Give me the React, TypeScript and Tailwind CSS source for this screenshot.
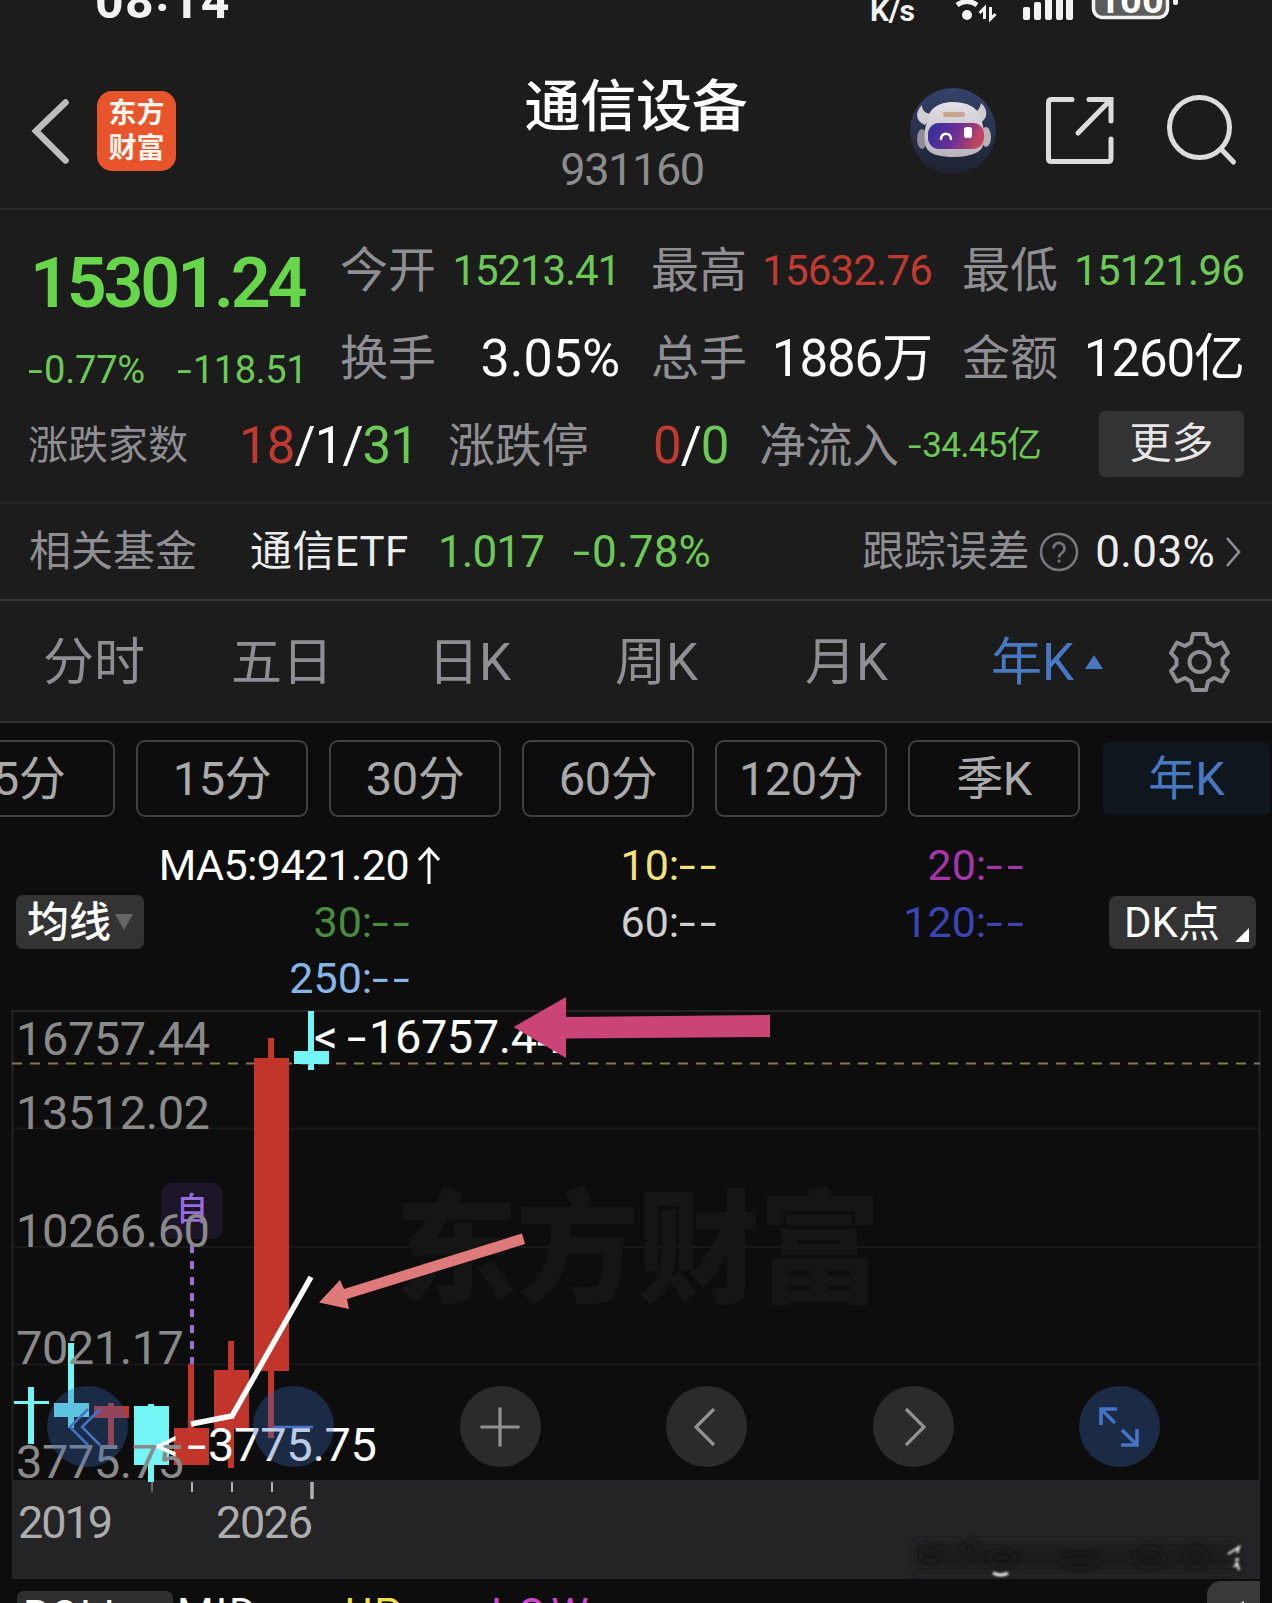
import type { ReactNode } from 'react';

const UP = 'text-[#c03a30]';
const DOWN = 'text-[#6cc956]';

interface Quote {
  label: string;
  value: string;
  valueClass: string;
}

const quoteColumns: { className: string; items: Quote[] }[] = [
  {
    className: 'w-[280px]',
    items: [
      { label: '今开', value: '15213.41', valueClass: `${DOWN} text-[42px] tracking-[-1.1px]` },
      { label: '换手', value: '3.05%', valueClass: 'text-white text-[52px] tracking-[0px]' },
    ],
  },
  {
    className: 'w-[281px] ml-[31px]',
    items: [
      { label: '最高', value: '15632.76', valueClass: `${UP} text-[42px] tracking-[-0.8px]` },
      { label: '总手', value: '1886万', valueClass: 'text-white text-[51px] tracking-[-1.1px]' },
    ],
  },
  {
    className: 'w-[282px] ml-[30px]',
    items: [
      { label: '最低', value: '15121.96', valueClass: `${DOWN} text-[42px] tracking-[-0.8px]` },
      { label: '金额', value: '1260亿', valueClass: 'text-white text-[51px] tracking-[-1.1px]' },
    ],
  },
];

const periods = ['5分', '15分', '30分', '60分', '120分', '季K'];

const yLabels = [
  { text: '16757.44', x: 16, y: 1054, w: 194 },
  { text: '13512.02', x: 16, y: 1128, w: 194 },
  { text: '10266.60', x: 16, y: 1246, w: 194 },
  { text: '7021.17', x: 16, y: 1363, w: 168 },
  { text: '3775.75', x: 16, y: 1477, w: 168 },
];

const RED = '#c1352b';
const CYAN = '#72f5f4';

const candles = [
  { x: 14, color: CYAN, high: 1386, low: 1443, top: 1400, bottom: 1403 },
  { x: 54, color: CYAN, high: 1342, low: 1427, top: 1402, bottom: 1416 },
  { x: 94, color: RED, high: 1402, low: 1447, top: 1405, bottom: 1417 },
  { x: 134, color: CYAN, high: 1403, low: 1481, top: 1405, bottom: 1464 },
  { x: 174, color: RED, high: 1363, low: 1464, top: 1427, bottom: 1464 },
  { x: 214, color: RED, high: 1340, low: 1467, top: 1369, bottom: 1428 },
  { x: 254, color: RED, high: 1037, low: 1437, top: 1057, bottom: 1370 },
  { x: 294, color: CYAN, high: 1010, low: 1069, top: 1050, bottom: 1063 },
];

// wide minus sign, the plain hyphen is too short next to the digits
function Minus() {
  return <span className="mr-[0.15em] inline-block origin-left scale-x-140">-</span>;
}

function NoData() {
  return (
    <>
      <span className="mr-[9px] inline-block origin-left scale-x-140">-</span>
      <span className="mr-[4px] inline-block origin-left scale-x-140">-</span>
    </>
  );
}

function StatusBar() {
  return (
    <div className="relative h-[48px] text-[#f2f2f2]">
      <div className="absolute left-[95px] top-[-29px] flex text-[50px] leading-[60px] font-bold tracking-[1.4px]">
        08<span className="-mt-[7px]">:</span>14
      </div>
      <div className="absolute left-[870px] top-[-9px] text-[30px] leading-[40px] font-bold tracking-[-0.3px]">K/s</div>
      <svg className="absolute left-[950px] top-0" width="240" height="24" viewBox="950 0 240 24" fill="none">
        <circle cx="967" cy="15" r="5" fill="#f2f2f2" />
        <path d="M957 5 Q967 -2 977 5" stroke="#f2f2f2" strokeWidth="5" />
        <path d="M984.500 19V8l-5 5M990.500 7v12l5-5" stroke="#f2f2f2" strokeWidth="3" />
        <g fill="#f2f2f2">
          <rect x="1023" y="7" width="7" height="13" rx="2" />
          <rect x="1034" y="2" width="7" height="18" rx="2" />
          <rect x="1045" y="-5" width="7" height="25" rx="2" />
          <rect x="1056" y="-5" width="7" height="25" rx="2" />
          <rect x="1066" y="-5" width="7" height="25" rx="2" />
          <rect x="1173" y="-6" width="5" height="11" rx="2" />
        </g>
        <rect x="1093.500" y="-20" width="74" height="37.500" rx="9" fill="#5c5c5c" stroke="#f2f2f2" strokeWidth="3.500" />
        <text x="1131" y="13" textAnchor="middle" fontSize="38" fontWeight="700" fill="#fff">100</text>
      </svg>
    </div>
  );
}

function RobotAvatar() {
  return (
    <svg width="86" height="86" viewBox="0 0 86 86">
      <defs>
        <linearGradient id="bg" x1="0" y1="0" x2="0" y2="1">
          <stop offset="0" stopColor="#35426a" />
          <stop offset="1" stopColor="#1d2230" />
        </linearGradient>
        <linearGradient id="visor" x1="0" y1="0" x2="1" y2="0.2">
          <stop offset="0" stopColor="#2f2f9c" />
          <stop offset="0.55" stopColor="#6a2f96" />
          <stop offset="1" stopColor="#c04660" />
        </linearGradient>
        <linearGradient id="shell" x1="0" y1="0" x2="0" y2="1">
          <stop offset="0" stopColor="#e2dfe4" />
          <stop offset="1" stopColor="#b9b5bd" />
        </linearGradient>
      </defs>
      <circle cx="43" cy="43" r="43" fill="url(#bg)" />
      <path d="M12 17c-7 7-7 16 3 20l8-11c-7 0-11-3-11-9zM71 15c8 7 7 17-3 21l-8-11c7 0 10-4 11-10z" fill="#cfccd4" />
      <ellipse cx="12" cy="51" rx="5" ry="10" fill="#8f8b98" />
      <ellipse cx="76" cy="49" rx="5" ry="10" fill="#b9b2bb" />
      <path d="M18 31c1-11 12-17 25-17s25 5 27 15c5 10 5 24 2 31-4 6-16 9-28 9s-23-2-27-8c-4-8-3-20 1-30z" fill="url(#shell)" />
      <rect x="33" y="24" width="22" height="5" rx="2.500" fill="#c4a58e" />
      <rect x="18" y="35" width="56" height="26" rx="11" fill="url(#visor)" />
      <path d="M31 51c1-7 9-7 10 0" stroke="#fff" strokeWidth="2.500" fill="none" strokeLinecap="round" />
      <rect x="54" y="39" width="8" height="11" rx="2.500" fill="#fff" />
    </svg>
  );
}

function Header() {
  return (
    <div className="flex h-[162px] items-start border-b-2 border-[#2c2c2c] pt-[40px]">
      <svg className="ml-[28px] mt-[8px]" width="44" height="70" viewBox="28 96 44 70" fill="none">
        <path d="M65.500 102.500L36 131L65.500 160.500" stroke="#bdbdbd" strokeWidth="6.500" strokeLinecap="round" />
      </svg>
      <div className="ml-[25px] mt-[3px] h-[80px] w-[79px] rounded-[15px] bg-[#e8552c] pt-[5px] text-center text-[28px] leading-[35px] font-bold text-[#fff6ee]">
        <div>东方</div>
        <div>财富</div>
      </div>
      <div className="-mt-[21px] ml-[324px] w-[272px] text-center">
        <div className="text-[56px] leading-[80px] font-medium tracking-[-0.3px] text-white">通信设备</div>
        <div className="-mt-[3px] -ml-[8px] text-[45px] leading-[52px] tracking-[-1.4px] text-[#8c8c8c]">931160</div>
      </div>
      <div className="ml-[138px]">
        <RobotAvatar />
      </div>
      <svg className="ml-[46px] mt-[5px]" width="76" height="76" viewBox="1043 93 76 76" fill="none" stroke="#dcdcdc" strokeWidth="5">
        <path d="M1073 99.500H1052.500Q1049.500 99.500 1049.500 102.500V158.500Q1049.500 161.500 1052.500 161.500H1109Q1112 161.500 1112 158.500V139" strokeLinecap="round" />
        <path d="M1090 99.500H1112V121M1111 100.500L1079 133" strokeLinecap="round" />
      </svg>
      <svg className="ml-[46px] mt-[5px]" width="76" height="76" viewBox="1164 93 76 76" fill="none" stroke="#dcdcdc" strokeWidth="5">
        <circle cx="1199.500" cy="127.500" r="30" />
        <path d="M1221 149L1233.500 162" strokeLinecap="round" />
      </svg>
    </div>
  );
}

function QuotePanel() {
  return (
    <div className="h-[294px] border-b-2 border-[#262626]">
      <div className="flex h-[190px]">
        <div className="w-[340px]">
          <div className="mt-[33px] ml-[30px] text-[70px] leading-[80px] font-semibold tracking-[-3.2px] text-[#67d64b]">15301.24</div>
          <div className={`mt-[22px] flex text-[38px] leading-[50px] ${DOWN}`}>
            <div className="ml-[28px] w-[149px] tracking-[-0.2px]">
              <Minus />0.77%
            </div>
            <div className="tracking-[-0.4px]">
              <Minus />118.51
            </div>
          </div>
        </div>
        {quoteColumns.map((column, i) => (
          <div key={i} className={`pt-[17px] ${column.className}`}>
            {column.items.map((item) => (
              <div key={item.label} className="flex h-[88px] items-center justify-between leading-[88px]">
                <span className="text-[48px] text-[#8e8e93]">{item.label}</span>
                <span className={item.valueClass}>{item.value}</span>
              </div>
            ))}
          </div>
        ))}
      </div>
      <div className="flex h-[92px] items-center leading-[92px] text-[#8e8e93]">
        <span className="ml-[28px] w-[211px] text-[40px]">涨跌家数</span>
        <span className="w-[209px] text-[51px] tracking-[-0.9px] text-white">
          <span className={UP}>18</span>/1/<span className={DOWN}>31</span>
        </span>
        <span className="w-[205px] text-[47px] tracking-[-0.3px]">涨跌停</span>
        <span className="w-[106px] text-[51px] tracking-[-1px] text-white">
          <span className={UP}>0</span>/<span className={DOWN}>0</span>
        </span>
        <span className="w-[149px] text-[47px] tracking-[-0.5px]">净流入</span>
        <span className={`w-[191px] text-[35px] tracking-[-0.7px] ${DOWN}`}>
          <Minus />34.45亿
        </span>
        <span className="-mt-[4px] h-[66px] w-[145px] rounded-[6px] bg-[#333333] text-center text-[42px] leading-[66px] text-[#e6e6e6]">更多</span>
      </div>
    </div>
  );
}

function FundRow() {
  return (
    <div className="flex h-[97px] items-center border-b-2 border-[#333333] leading-[94px]">
      <span className="ml-[29px] w-[221px] text-[42px] text-[#8e8e93]">相关基金</span>
      <span className="w-[188px] text-[42px] tracking-[0.4px] text-[#ececec]">通信ETF</span>
      <span className={`w-[135px] text-[44px] tracking-[-0.9px] ${DOWN}`}>1.017</span>
      <span className={`w-[289px] text-[44px] tracking-[0.2px] ${DOWN}`}>
        <Minus />0.78%
      </span>
      <span className="text-[42px] tracking-[-0.2px] text-[#8e8e93]">跟踪误差</span>
      <svg className="ml-[9px]" width="42" height="42" viewBox="0 0 42 42" fill="none" stroke="#77777b" strokeWidth="2.600">
        <circle cx="21" cy="21" r="18" />
        <path d="M15.500 17.500a5.500 5.500 0 1 1 8.500 4.500c-2.500 1.600-3 2.400-3 4.500M21 28.500v3" />
      </svg>
      <span className="ml-[15px] w-[130px] text-[44px] tracking-[0.4px] text-[#ececec]">0.03%</span>
      <svg width="18" height="32" viewBox="0 0 18 32" fill="none" stroke="#8e8e93" strokeWidth="2.600">
        <path d="M2 2L14 16L2 30" />
      </svg>
    </div>
  );
}

function Tab({ className, children }: { className: string; children: ReactNode }) {
  return <span className={`text-[51px] leading-[118px] ${className}`}>{children}</span>;
}

function PeriodTabs() {
  return (
    <div className="flex h-[122px] items-center border-b-2 border-[#2f2f2f] text-[#8e8e93]">
      <Tab className="ml-[43px] mt-[4px] w-[188px]">分时</Tab>
      <Tab className="mt-[4px] w-[197px]">五日</Tab>
      <Tab className="mt-[4px] w-[187px]">日K</Tab>
      <Tab className="mt-[4px] w-[190px]">周K</Tab>
      <Tab className="mt-[4px] w-[186px]">月K</Tab>
      <Tab className="mt-[4px] w-[93px] text-[#4878c2]">年K</Tab>
      <svg className="mt-[2px]" width="20" height="14" viewBox="0 0 20 14">
        <path d="M10 0L19 14H1z" fill="#4878c2" />
      </svg>
      <svg className="mt-[2px] ml-[63px]" width="64" height="64" viewBox="0 0 64 64" fill="none" stroke="#8e8e93" strokeWidth="4">
        <path
          d="M26 4H39L41 12.500L47 16L55 12.500L61 23L55.500 29V35L61 41L55 51.500L47 48L41 51.500L39 60H26L24 51.500L18 48L10 51.500L4 41L9.500 35V29L4 23L10 12.500L18 16L24 12.500z"
          strokeLinejoin="round"
        />
        <circle cx="32.500" cy="32" r="10" />
      </svg>
    </div>
  );
}

function PeriodChips() {
  return (
    <div className="-ml-[57px] flex h-[95px] w-[1400px] gap-[21px] pt-[17px]">
      {periods.map((period) => (
        <div
          key={period}
          className="h-[77px] w-[172px] shrink-0 rounded-[9px] border-2 border-[#404040] text-center text-[47px] leading-[74px] tracking-[-0.5px] text-[#aaaaaa]"
        >
          {period}
        </div>
      ))}
      <div className="mt-[2px] ml-[2px] h-[73px] w-[167px] shrink-0 rounded-[6px] bg-[#10161d] text-center text-[47px] leading-[73px] text-[#4878c2]">
        年K
      </div>
    </div>
  );
}

function MovingAverages() {
  return (
    <div className="flex h-[192px] pt-[18px]">
      <div className="mt-[59px] ml-[16px] flex h-[54px] w-[128px] items-center rounded-[7px] bg-[#333333] pl-[11px] text-[42px] leading-[54px] font-medium text-white">
        <span className="mt-[2px]">均线</span>
        <svg className="ml-[4px]" width="18" height="16" viewBox="0 0 18 16">
          <path d="M0 0H18L9 16z" fill="#666666" />
        </svg>
      </div>
      <div className="ml-[-4px] grid w-[890px] grid-cols-[269px_307px_307px] grid-rows-[57px_56px_56px] pt-[1px] text-right text-[43px] leading-[57px]">
        <span className="relative -ml-8 tracking-[-0.6px] text-white">
          MA5:9421.20
          <svg className="absolute -right-[34px] top-[9px]" width="28" height="40" viewBox="0 0 28 40" fill="none" stroke="#fff" strokeWidth="3">
            <path d="M14 38V3M4 14L14 3L24 14" />
          </svg>
        </span>
        <span className="text-[#f3e17c]">10:<NoData /></span>
        <span className="text-[#a535a8]">20:<NoData /></span>
        <span className="text-[#4a8c3e]">30:<NoData /></span>
        <span className="text-[#cfcfcf]">60:<NoData /></span>
        <span className="text-[#3b46b4]">120:<NoData /></span>
        <span className="text-[#86b6e8]">250:<NoData /></span>
      </div>
      <div className="relative mt-[60px] ml-[79px] h-[53px] w-[147px] rounded-[7px] bg-[#333333] pl-[15px] text-[42px] leading-[53px] text-white">
        DK点
        <svg className="absolute right-[7px] bottom-[7px]" width="14" height="14" viewBox="0 0 14 14">
          <path d="M14 0V14H0z" fill="#fff" />
        </svg>
      </div>
    </div>
  );
}

function ControlButton({ active, children }: { active?: boolean; children: ReactNode }) {
  return (
    <div
      className={`flex h-[81px] w-[81px] items-center justify-center rounded-full ${
        active ? 'bg-[rgba(57,101,178,0.34)] text-[#4474c4]' : 'bg-[#2b2b2b] text-[#929292]'
      }`}
    >
      <svg width="44" height="44" viewBox="0 0 44 44" fill="none" stroke="currentColor" strokeWidth="3.200">
        {children}
      </svg>
    </div>
  );
}

function Chart() {
  return (
    <div className="relative h-[570px]">
      <svg className="block overflow-visible" width="1272" height="570" viewBox="0 1009 1272 570">
        <defs>
          <filter id="smudge" x="-20%" y="-60%" width="140%" height="220%">
            <feGaussianBlur stdDeviation="4" />
          </filter>
          <filter id="soft">
            <feGaussianBlur stdDeviation="0.8" />
          </filter>
        </defs>

        {/* frame and grid */}
        <path d="M12.500 1479V1010H1259.500V1479" fill="none" stroke="#242424" strokeWidth="2" />
        <path d="M13 1127.500H1259M13 1246H1259M13 1363.500H1259" stroke="#191919" strokeWidth="2" />
        <text x="395" y="1292" fontSize="123" fontWeight="900" textLength="486" fill="#151515">东方财富</text>
        <rect x="12" y="1479" width="1248" height="99" fill="#242426" />

        {/* added-to-watchlist marker */}
        <rect x="161" y="1182" width="62" height="56" rx="11" fill="#1d1528" />
        <text x="176" y="1219" fontSize="32" fontWeight="500" fill="#9a6ae0">自</text>
        <path d="M192 1244V1363" stroke="#8f6fcf" strokeWidth="4" strokeDasharray="8 8" />

        {candles.map((c) => (
          <g key={c.x} fill={c.color}>
            <rect x={c.x + 14} y={c.high} width="6" height={c.low - c.high} />
            <rect x={c.x} y={c.top} width="35" height={c.bottom - c.top} />
          </g>
        ))}

        <path d="M12 1062.500H1254M1254 1062.500H1260" stroke="#85775a" strokeWidth="1.800" strokeDasharray="10 8" />
        <path d="M254 1062.500H289" stroke={RED} strokeWidth="4" />
        <path d="M294 1056.500H329" stroke={CYAN} strokeWidth="13" />

        {yLabels.map((label) => (
          <text key={label.text} x={label.x} y={label.y} fontSize="47" textLength={label.w} fill="#8a8a8a">
            {label.text}
          </text>
        ))}

        {/* MA5 */}
        <path d="M191 1423L232 1415L311 1276" fill="none" stroke="#fff" strokeWidth="5.500" />

        {/* period high and low */}
        <g fontSize="47" fill="#fff">
          <text x="314" y="1052">&lt;</text>
          <text transform="translate(347 1052) scale(1.5 1)">-</text>
          <text x="369" y="1052" textLength="194">16757.44</text>
          <text x="155" y="1460">&lt;</text>
          <text transform="translate(187 1460) scale(1.5 1)">-</text>
          <text x="208" y="1460" textLength="169">3775.75</text>
        </g>

        {/* annotations */}
        <path d="M513.500 1026L566 996V1016L770 1014V1036L566 1037.500V1057z" fill="#cb4476" />
        <path d="M319 1301.500L340 1279L344 1288L522 1232.500L525 1243L347 1298L349 1308z" fill="#de7a79" />

        {/* x axis */}
        <path d="M152 1481V1491" stroke="#6a6a6a" strokeWidth="2" />
        <path d="M192 1481V1491M232 1481V1491M272 1481V1491" stroke="#b0b0b0" strokeWidth="2" />
        <path d="M312 1481V1498" stroke="#b0b0b0" strokeWidth="3.500" />
        <text x="18" y="1537" fontSize="45" textLength="95" fill="#adadad">2019</text>
        <text x="216" y="1537" fontSize="45" textLength="97" fill="#adadad">2026</text>

        {/* scrubbed caption */}
        <rect x="915" y="1541" width="322" height="30" fill="#1e1e1e" filter="url(#smudge)" />
        <g fill="#161616" filter="url(#smudge)">
          <ellipse cx="930" cy="1552" rx="9" ry="7" />
          <ellipse cx="970" cy="1548" rx="8" ry="6" />
          <ellipse cx="1002" cy="1557" rx="14" ry="6" />
          <ellipse cx="1080" cy="1560" rx="18" ry="7" />
          <ellipse cx="1150" cy="1557" rx="14" ry="9" />
          <ellipse cx="1196" cy="1556" rx="9" ry="9" />
        </g>
        <g filter="url(#soft)" fill="none" stroke="#f0f0f0">
          <path d="M993 1572Q1001 1576 1008 1572" strokeWidth="3" />
          <path d="M1228 1553L1239 1546L1237 1552M1235 1559L1239 1558M1234 1566L1237 1562L1239 1569" strokeWidth="2" />
        </g>
      </svg>

      {/* chart controls */}
      <div className="absolute top-[376px] left-[47px] flex w-[1113px] justify-between">
        <ControlButton active>
          <path d="M22 4L4 22L22 40M34 4L16 22L34 40" strokeWidth="2.500" />
        </ControlButton>
        <ControlButton active>
          <path d="M2 22H41" strokeWidth="2.500" />
        </ControlButton>
        <ControlButton>
          <path d="M2.500 22H41.500M22 2.500V41.500" />
        </ControlButton>
        <ControlButton>
          <path d="M29 4L11 22L29 40" />
        </ControlButton>
        <ControlButton>
          <path d="M15 4L33 22L15 40" />
        </ControlButton>
        <ControlButton active>
          <path d="M4 20V4H20M5 5L18 18M40 24V40H24M39 39L25 25" strokeWidth="3.600" />
        </ControlButton>
      </div>
    </div>
  );
}

function BollRow() {
  return (
    <div className="flex h-[24px] items-start overflow-hidden text-[42px] leading-[50px]">
      <div className="mt-[11px] ml-[17px] h-[54px] w-[156px] shrink-0 rounded-[7px] bg-[#303030] pl-[6px] tracking-[1px] text-white">BOLL</div>
      <span className="mt-[9px] ml-[4px] w-[168px] tracking-[2px] text-white">MID</span>
      <span className="mt-[9px] w-[146px] tracking-[2px] text-[#f0e34c]">UP</span>
      <span className="mt-[9px] w-[716px] tracking-[5px] text-[#cf46cf]">LOW</span>
      <div className="mt-[1px] h-[54px] w-[53px] shrink-0 rounded-tl-[14px] bg-[#3a3a3a] pt-[20px] pl-[24px]">
        <svg width="18" height="20" viewBox="0 0 18 20">
          <path d="M0 8L13 0V10z" fill="#fff" />
        </svg>
      </div>
    </div>
  );
}

export default function App() {
  return (
    <div className="h-[1603px] w-[1272px] overflow-hidden bg-[#0d0d0d] font-['Roboto','Noto_Sans_CJK_SC',sans-serif] whitespace-nowrap">
      <div className="bg-[#1c1c1c]">
        <StatusBar />
        <Header />
        <QuotePanel />
        <FundRow />
        <PeriodTabs />
      </div>
      <PeriodChips />
      <MovingAverages />
      <Chart />
      <BollRow />
    </div>
  );
}
